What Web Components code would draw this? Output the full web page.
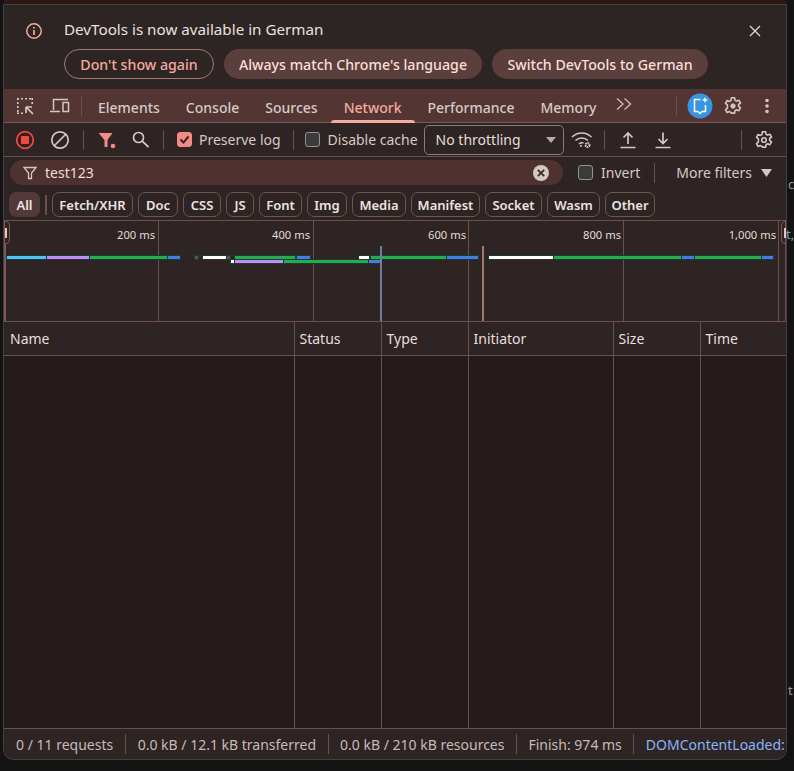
<!DOCTYPE html>
<html><head><meta charset="utf-8"><style>
html,body{margin:0;height:100%;background:#131313;overflow:hidden}
body{font-family:"Noto Sans","Open Sans",sans-serif;color:#eadfdd}
</style></head><body>
<dt-app></dt-app>
<script>
const I={
inspect:'<svg width="20" height="20" viewBox="0 0 20 20" fill="none" stroke="#d5c7c4"><path stroke-width="1.6" stroke-dasharray="2 2" d="M2 2.800H18M2.800 2V18M2 17.200H9M17.200 2V9"/><path stroke-width="1.700" d="M11 11V17M11 11H17M11 11L18 18"/></svg>',
device:'<svg width="22" height="20" viewBox="0 0 22 20" fill="none" stroke="#d5c7c4" stroke-width="1.500"><path d="M4.500 14V3.500H19"/><path d="M1 15.500H11"/><rect x="14" y="6.500" width="5.500" height="9"/></svg>',
more:'<svg width="18" height="16" viewBox="0 0 18 16" fill="none" stroke="#c9b8b5" stroke-width="1.400"><path d="M2 2.500L8 8L2 13.500M9.500 2.500L15.500 8L9.500 13.500"/></svg>',
gear:'<svg width="20" height="20" viewBox="0 0 20 20" fill="none" stroke="#d5c7c4" stroke-width="1.600"><path d="M8.400 1.800h3.200l.4 2.400 1.600.9 2.300-.9 1.600 2.800-1.900 1.500v1.900l1.900 1.500-1.600 2.800-2.300-.9-1.600.9-.4 2.400H8.400L8 16.500l-1.600-.9-2.300.9-1.600-2.800 1.900-1.500V8.800L2.500 7.300l1.600-2.800 2.300.9 1.600-.9z" stroke-linejoin="round"/><circle cx="10" cy="10" r="2.200" fill="#d5c7c4" stroke-width="1"/></svg>',
gear2:'<svg width="20" height="20" viewBox="0 0 20 20" fill="none" stroke="#d5c7c4" stroke-width="1.600"><path d="M8.400 1.800h3.200l.4 2.400 1.600.9 2.300-.9 1.600 2.800-1.900 1.500v1.900l1.900 1.500-1.600 2.800-2.300-.9-1.600.9-.4 2.400H8.400L8 16.500l-1.600-.9-2.300.9-1.600-2.800 1.900-1.500V8.800L2.500 7.300l1.600-2.800 2.300.9 1.600-.9z" stroke-linejoin="round"/><circle cx="10" cy="10" r="2.300"/></svg>',
dots:'<svg width="6" height="16" viewBox="0 0 6 16" fill="#d5c7c4"><circle cx="3" cy="2.500" r="1.800"/><circle cx="3" cy="8" r="1.800"/><circle cx="3" cy="13.500" r="1.800"/></svg>',
ai:'<svg width="26" height="26" viewBox="0 0 26 26"><defs><linearGradient id="g" x1="0" y1="1" x2="1" y2="0"><stop offset="0" stop-color="#3f8fe6"/><stop offset="1" stop-color="#2f9be0"/></linearGradient></defs><circle cx="13" cy="13" r="12.500" fill="url(#g)"/><path d="M13.500 6.500H7.500V18.500H11l2 2 2-2h3.500V12" fill="none" stroke="#fff" stroke-width="1.500"/><path d="M18 4l.9 2.100L21 7l-2.100.9L18 10l-.9-2.100L15 7l2.100-.9z" fill="#fff"/></svg>',
rec:'<svg width="20" height="20" viewBox="0 0 20 20"><circle cx="10" cy="10" r="8.300" fill="none" stroke="#f2493c" stroke-width="1.700"/><rect x="6" y="6" width="8" height="8" rx="1" fill="#f2493c"/></svg>',
clear:'<svg width="20" height="20" viewBox="0 0 20 20" fill="none" stroke="#d5c7c4" stroke-width="1.700"><circle cx="10" cy="10" r="8.200"/><path d="M4.500 15.500L15.500 4.500"/></svg>',
funnel:'<svg width="20" height="20" viewBox="0 0 20 20"><path d="M1 3H15L10 10V17H7V10z" fill="#f28b82" transform="translate(.5 0)"/><circle cx="16" cy="16" r="2.300" fill="#f28b82"/></svg>',
search:'<svg width="20" height="20" viewBox="0 0 20 20" fill="none" stroke="#d5c7c4" stroke-width="1.700"><circle cx="7.500" cy="7.500" r="5"/><path d="M11.200 11.200L17.500 17"/></svg>',
wifi:'<svg width="22" height="20" viewBox="0 0 22 20" fill="none" stroke="#d5c7c4" stroke-width="1.500"><path d="M1 7C6.500 1.500 15 1.500 20.500 7"/><path d="M4.500 10.500C8 7 13.500 7 17 10.500"/><path d="M8 14c1.500-1.300 3.300-1.500 4.500-1"/><circle cx="10" cy="16" r="1" fill="#d5c7c4" stroke="none"/><circle cx="16.500" cy="15" r="2" stroke-dasharray="1.500 .6" stroke-width="2"/></svg>',
up:'<svg width="18" height="18" viewBox="0 0 18 18" fill="none" stroke="#d5c7c4" stroke-width="1.700"><path d="M9 13V2M4.500 6.500L9 2l4.500 4.500M1.500 16.500h15"/></svg>',
down:'<svg width="18" height="18" viewBox="0 0 18 18" fill="none" stroke="#d5c7c4" stroke-width="1.700"><path d="M9 1.500V12.500M4.500 8L9 12.500 13.500 8M1.500 16.500h15"/></svg>',
filter:'<svg width="14" height="14" viewBox="0 0 14 14" fill="none" stroke="#d5c7c4" stroke-width="1.300"><path d="M1 1.500H13L8.500 7V12.500H5.500V7z"/></svg>',
x:'<svg width="18" height="18" viewBox="0 0 18 18" fill="#d5c7c4"><circle cx="9" cy="9" r="8"/><path d="M5.800 5.800L12.200 12.200M12.200 5.800L5.800 12.200" stroke="#3a2b2a" stroke-width="1.800"/></svg>',
close:'<svg width="12" height="12" viewBox="0 0 12 12" stroke="#e2d6d4" stroke-width="1.300"><path d="M1 1L11 11M11 1L1 11"/></svg>',
info:'<svg width="18" height="18" viewBox="0 0 18 18" fill="none" stroke="#f5a99f" stroke-width="1.500"><circle cx="9" cy="9" r="7.200"/><path d="M9 8V13M9 5V6.500" stroke-width="1.700"/></svg>'
};
class Base extends HTMLElement{
 constructor(){super();this.attachShadow({mode:'open'}).innerHTML='<style>'+this.constructor.css+'</style>'+this.constructor.html}
}
const def=(n,c,h)=>{customElements.define(n,class extends Base{static css=c;static html=h})};

customElements.define('dt-icon',class extends HTMLElement{
 connectedCallback(){if(!this.shadowRoot){this.attachShadow({mode:'open'}).innerHTML='<style>:host{display:inline-flex;align-items:center;justify-content:center;flex:none}svg{display:block}</style>'+I[this.getAttribute('n')]}}
});
def('dt-pill',`:host{display:inline-flex;align-items:center;justify-content:center;height:30px;box-sizing:border-box;border-radius:15px;background:#5a3f3c;color:#fadedb;font-size:14.200px;font-weight:500;white-space:nowrap;padding-top:1px}
:host([outline]){background:transparent;border:1px solid #a37b75;color:#f5a99f}`,'<slot></slot>');
def('dt-sep',`:host{display:block;width:1px;height:20px;background:#6d4f4c;flex:none}`,'');
def('dt-infobar',`:host{display:block;background:#2d2524;height:84px;box-sizing:border-box;position:relative}
.t{display:flex;align-items:center;height:50px;padding-left:21px;box-sizing:border-box}
.t dt-icon{margin-top:2px}
.m{margin-left:21px;font-size:15.200px;color:#ece0de;white-space:nowrap;margin-top:-2px}
.t .x{margin-left:auto;margin-right:25px}
.b{display:flex;gap:10px;padding-left:60px;margin-top:-6px}`,
`<div class="t"><dt-icon n="info"></dt-icon><span class="m">DevTools is now available in German</span><dt-icon class="x" n="close"></dt-icon></div>
<div class="b"><dt-pill outline style="width:150px">Don't show again</dt-pill><dt-pill style="width:258px">Always match Chrome's language</dt-pill><dt-pill style="width:216px">Switch DevTools to German</dt-pill></div>`);
def('dt-tabbar',`:host{display:flex;align-items:center;background:#533534;height:34px;box-sizing:border-box;border-bottom:1px solid #7a5a56;color:#d8c9c6;font-size:14px;font-weight:500}
.ic{display:flex;align-items:center;gap:14px;padding-left:11px;width:71px;box-sizing:border-box}
.tab{padding:3px 13px 0;height:33px;display:flex;align-items:center;white-space:nowrap;box-sizing:border-box}
.on{color:#f5a99f;position:relative}
.on::after{content:"";position:absolute;left:0;right:0;bottom:-1px;height:3px;border-radius:3px 3px 0 0;background:#f5a99f}
.end{display:flex;align-items:center;margin-left:auto}`,
`<div class="ic"><dt-icon n="inspect"></dt-icon><dt-icon n="device"></dt-icon></div><dt-sep style="margin-left:6px;"></dt-sep>
<span class="tab" style="margin-left:3px">Elements</span><span class="tab">Console</span><span class="tab">Sources</span><span class="tab on">Network</span><span class="tab">Performance</span><span class="tab">Memory</span>
<dt-icon n="more" style="margin-left:6px;margin-top:-3px"></dt-icon>
<div class="end"><dt-sep style="margin-right:10px;height:20px"></dt-sep><dt-icon n="ai" style="margin-right:10px"></dt-icon><dt-icon n="gear"></dt-icon><dt-icon n="dots" style="margin:0 16px 0 21px"></dt-icon></div>`);
def('dt-check',`:host{display:inline-flex;align-items:center;gap:7px;font-size:14px;color:#d8c9c6;white-space:nowrap}
:host([wide]){gap:8px}
i{display:flex;width:15px;height:15px;box-sizing:border-box;border-radius:3px;border:1px solid #9a9090;background:#3b3b3b}
:host([on]) i{background:#f28b82;border-color:#f28b82}
svg{display:none}:host([on]) svg{display:block}`,
`<i><svg width="13" height="13" viewBox="0 0 13 13" fill="none" stroke="#3a2524" stroke-width="2"><path d="M2.500 6.500L5.500 9.500L10.500 3.500"/></svg></i><slot></slot>`);
def('dt-toolbar',`:host{display:flex;align-items:center;height:34px;box-sizing:border-box;background:#2d2423;border-bottom:1px solid #6d4f4c;padding-left:11px}
.sel{display:flex;align-items:center;width:140px;height:30px;box-sizing:border-box;border:1px solid #8f7c79;border-radius:5px;padding-left:11px;font-size:14px;color:#e6dcda;margin-left:6px;flex:none;white-space:nowrap}
.sel svg{margin-left:auto;margin-right:7px}`,
`<dt-icon n="rec"></dt-icon><dt-icon n="clear" style="margin-left:15px"></dt-icon><dt-sep style="margin-left:13px"></dt-sep>
<dt-icon n="funnel" style="margin-left:13px"></dt-icon><dt-icon n="search" style="margin-left:14px"></dt-icon><dt-sep style="margin-left:12px"></dt-sep>
<dt-check on style="margin-left:13px">Preserve log</dt-check><dt-sep style="margin-left:12px"></dt-sep><dt-check wide style="margin-left:11px">Disable cache</dt-check>
<div class="sel">No throttling<svg width="10" height="6" viewBox="0 0 10 6"><path d="M0 0H10L5 6z" fill="#b9aaa7"/></svg></div>
<dt-icon n="wifi" style="margin-left:7px"></dt-icon><dt-sep style="margin-left:11px"></dt-sep>
<dt-icon n="up" style="margin-left:14px"></dt-icon><dt-icon n="down" style="margin-left:17px"></dt-icon><dt-sep style="margin-left:auto"></dt-sep><dt-icon n="gear2" style="margin-left:12px;margin-right:12px"></dt-icon>`);
def('dt-filterbar',`:host{display:flex;align-items:center;height:31px;box-sizing:border-box;background:#2d2423;padding-left:6px}
.box{display:flex;align-items:center;width:553px;height:25px;border-radius:13px;background:#4f3230;box-sizing:border-box;padding-left:13px;font-size:14px;color:#ebdedc}
.box span{margin-left:8px}.box dt-icon{flex:none}
.more{font-size:14px;color:#d8c9c6;margin-left:21px;white-space:nowrap}`,
`<div class="box"><dt-icon n="filter"></dt-icon><span>test123</span><dt-icon n="x" style="margin-left:auto;margin-right:13px"></dt-icon></div>
<dt-check wide style="margin-left:15px">Invert</dt-check><dt-sep style="margin-left:14px"></dt-sep><span class="more">More filters</span>
<svg style="margin-left:9px" width="11" height="8" viewBox="0 0 11 8"><path d="M0 0H11L5.500 8z" fill="#d5c7c4"/></svg>`);
def('dt-chip',`:host{display:inline-flex;align-items:center;justify-content:center;height:25px;box-sizing:border-box;border:1px solid #6d5754;border-radius:7px;font-size:13px;font-weight:600;color:#efe4e2;white-space:nowrap}
:host([on]){background:#533a38;border-color:#533a38}`,'<slot></slot>');
const chips=[['Fetch/XHR',81],['Doc',40],['CSS',38],['JS',28],['Font',43],['Img',40],['Media',54],['Manifest',69],['Socket',57],['Wasm',53],['Other',50]];
def('dt-chips',`:host{display:flex;align-items:center;height:33px;box-sizing:border-box;gap:5px;background:#2d2423;padding:1px 0 0 5px;border-bottom:1px solid #6d4f4c}`,
`<dt-chip on style="width:31px">All</dt-chip><dt-sep style="height:20px;margin:0 0 0 0;width:2px"></dt-sep>`+chips.map(c=>`<dt-chip style="width:${c[1]}px">${c[0]}</dt-chip>`).join(''));
const C={c:'#4fc3f7',p:'#c58af9',g:'#23ad4f',b:'#3f7fe6',w:'#ffffff',d:'#5a5453'};
const bars=[[7,46,'c',0],[47,89,'p',0],[90,167,'g',0],[168,180,'b',0],[195,198,'d',0],[203,227,'w',0],[227,230,'d',0],[235,295,'g',0],[297,310,'b',0],[231,234,'w',1],[235,283,'p',1],[284,368,'g',1],[369,381,'b',1],[359,369,'w',0],[371,446,'g',0],[447,478,'b',0],[489,553,'w',0],[554,681,'g',0],[682,694,'b',0],[695,761,'g',0],[762,773,'b',0]];
const lines=[158,313,468,623,778], labels=['200 ms','400 ms','600 ms','800 ms','1,000 ms'];
def('dt-overview',`:host{display:block;position:relative;height:101px;box-sizing:border-box;background:#2d2423;border-bottom:1px solid #6d4f4c;overflow:hidden}
.l{position:absolute;top:0;bottom:0;width:1px;background:#6d4f4c}
.t{position:absolute;top:6px;font-size:11.200px;color:#e6dcda;white-space:nowrap;transform:translateX(-100%)}
.b{position:absolute;height:3px;outline:1px solid #1f3a30}
.v{position:absolute;top:25px;bottom:0;width:2px}
.edgeL{position:absolute;left:0;top:0;bottom:0;width:2px;background:#7a5a56}
.edgeR{position:absolute;right:0;top:0;bottom:0;width:1px;background:#6d4f4c}
.h{position:absolute;top:0;width:5px;height:23px;border:1px solid #7a5a56;background:#2d2423;box-sizing:border-box}
.h i{position:absolute;left:0;width:2px;top:6px;height:10px;background:#f5c0b8}`,
lines.map((x,i)=>`<div class="l" style="left:${x-4}px"></div><div class="t" style="left:${x-(i?(i==1?7:6):7)}px">${labels[i]}</div>`).join('')+
bars.map(b=>`<div class="b" style="left:${b[0]-4}px;width:${b[1]-b[0]}px;top:${b[3]?39:35}px;background:${C[b[2]]}"></div>`).join('')+
`<div class="edgeL"></div><div class="edgeR"></div><div class="v" style="left:376px;background:#6d7f9f"></div><div class="v" style="left:478px;background:#a6776f"></div>
<div class="h" style="left:0;width:6px;border-radius:0 4px 4px 0"><i></i></div><div class="h" style="right:0;border-radius:4px 0 0 4px"><i style="left:2px"></i></div>`);
def('dt-table',`:host{display:grid;grid-template-columns:291px 87px 87px 145px 87px 1fr;grid-template-rows:34px 1fr;flex:1;min-height:0}
.h{display:flex;align-items:center;background:#2d2423;border-bottom:1px solid #6d4f4c;border-right:1px solid #6d4f4c;padding-left:4.500px;font-size:14px;color:#eadfdd;box-sizing:border-box}
.c{background:#251b1b;border-right:1px solid #6d4f4c;border-bottom:1px solid #6d4f4c}
.h:first-of-type{padding-left:6px}.h:nth-of-type(6),.c:last-child{border-right:none}`,
['Name','Status','Type','Initiator','Size','Time'].map(t=>`<div class="h">${t}</div>`).join('')+'<div class="c"></div>'.repeat(6));
def('dt-status',`:host{display:flex;align-items:center;height:30px;background:#2d2423;border-radius:0 0 10px 10px;padding-left:12px;font-size:14px;color:#c9bbb8;white-space:nowrap;flex:none}
dt-sep{margin:0 11.500px 0 11.500px}dt-sep:first-of-type{margin-right:12px}.link{color:#8ab4f8}`,
`<span>0 / 11 requests</span><dt-sep></dt-sep><span>0.0 kB / 12.1 kB transferred</span><dt-sep></dt-sep><span>0.0 kB / 210 kB resources</span><dt-sep></dt-sep><span>Finish: 974 ms</span><dt-sep></dt-sep><span class="link">DOMContentLoaded:</span>`);
def('dt-app',`:host{display:block;position:relative;width:794px;height:771px;background:#131313;overflow:hidden}
.strip{height:5px;background:#2f1714;width:782px;margin-left:4px}
.panel{display:flex;flex-direction:column;width:782px;height:754px;margin-left:4px;border-radius:0 0 10px 10px;box-shadow:0 0 0 1px #443f3e}
.frag{position:absolute;font-size:13px;color:#8a9a9e}`,
`<div class="strip"></div><div class="panel"><dt-infobar></dt-infobar><dt-tabbar></dt-tabbar><dt-toolbar></dt-toolbar><dt-filterbar></dt-filterbar><dt-chips></dt-chips><dt-overview></dt-overview><dt-table></dt-table><dt-status></dt-status></div>
<span class="frag" style="top:175px;left:788px">c</span><span class="frag" style="top:225px;left:786px;color:#6fa8b8">t,</span><span class="frag" style="top:681px;left:788px">t</span>`);
</script></body></html>
